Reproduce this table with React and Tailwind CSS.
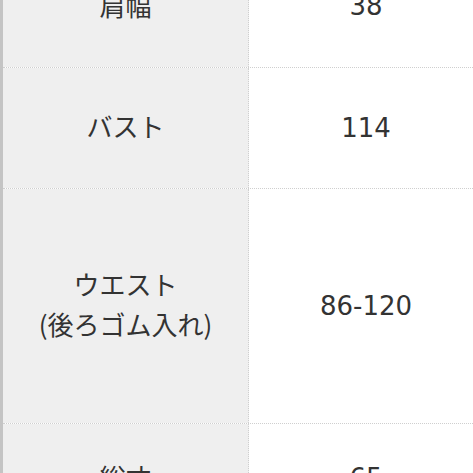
export default function App() {
  const rows = [
    { label: ["肩幅"], value: "38", h: "h-[121px]" },
    { label: ["バスト"], value: "114", h: "h-[121px]" },
    { label: ["ウエスト", "(後ろゴム入れ)"], value: "86-120", h: "h-[235px]" },
    { label: ["総丈"], value: "65", h: "h-[110px]" },
  ];
  return (
    <div className="w-[473px] h-[473px] overflow-hidden bg-white">
      <div
        className="w-[483px] -mt-[54px] border-l-[3px] border-[#c4c4c4] text-[#333333] text-[26px]"
        style={{ fontFamily: '"DejaVu Sans", "Noto Sans CJK JP", sans-serif' }}
      >
        {rows.map((r, i) => (
          <div
            key={i}
            className={`grid grid-cols-[246px_1fr] ${r.h} ${i > 0 ? "border-t border-dotted border-[#cfcfcf]" : ""}`}
          >
            <div className="bg-[#efefef] border-r border-dotted border-[#cfcfcf] flex flex-col items-center justify-center leading-[40px] pb-[4px]">
              {r.label.map((l, j) => (
                <span key={j} style={{ fontFamily: '"Noto Sans CJK JP", sans-serif' }}>{l}</span>
              ))}
            </div>
            <div className="flex items-center justify-center">{r.value}</div>
          </div>
        ))}
      </div>
    </div>
  );
}
